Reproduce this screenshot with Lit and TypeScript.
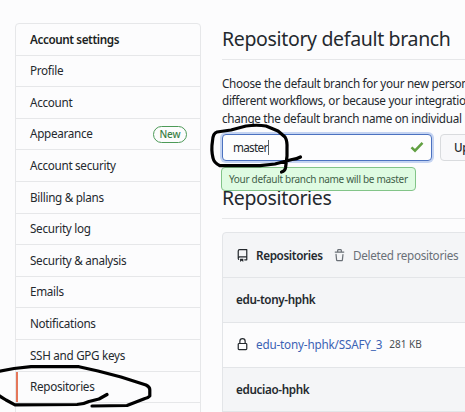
import { LitElement, html, css, svg } from "lit";
import { customElement } from "lit/decorators.js";

const MENU = [
  "Profile", "Account", "Appearance", "Account security", "Billing & plans", "Security log",
  "Security & analysis", "Emails", "Notifications", "SSH and GPG keys", "Repositories",
];

const ICONS = {
  repo: svg`<path fill-rule="evenodd" d="M2 2.5A2.5 2.5 0 014.5 0h8.75a.75.75 0 01.75.75v12.5a.75.75 0 01-.75.75h-2.5a.75.75 0 110-1.5h1.75v-2h-8a1 1 0 00-.714 1.7.75.75 0 01-1.072 1.05A2.495 2.495 0 012 11.5v-9zm10.500-1V9h-8c-.356 0-.694.074-1 .208V2.500a1 1 0 011-1h8zM5 12.250v3.250a.25.25 0 00.4.2l1.450-1.087a.25.25 0 01.3 0L8.600 15.700a.25.25 0 00.4-.2v-3.250a.25.25 0 00-.25-.25h-3.500a.25.25 0 00-.25.25z"/>`,
  trash: svg`<path fill-rule="evenodd" d="M6.500 1.750a.25.25 0 01.25-.25h2.500a.25.25 0 01.25.25V3h-3V1.750zm4.500 0V3h2.250a.75.75 0 010 1.500H2.750a.75.75 0 010-1.500H5V1.750C5 .784 5.784 0 6.750 0h2.500C10.216 0 11 .784 11 1.750zM4.496 6.675a.75.75 0 10-1.492.150l.660 6.600A1.750 1.750 0 005.405 15h5.190c.9 0 1.652-.681 1.741-1.576l.660-6.600a.75.75 0 00-1.492-.149l-.660 6.600a.25.25 0 01-.249.225h-5.190a.25.25 0 01-.249-.225l-.660-6.600z"/>`,
  lock: svg`<path fill-rule="evenodd" d="M4 4v2h-.25A1.750 1.750 0 002 7.750v5.500c0 .966.784 1.750 1.750 1.750h8.500A1.750 1.750 0 0014 13.250v-5.500A1.750 1.750 0 0012.250 6H12V4a4 4 0 10-8 0zm6.500 2V4a2.500 2.500 0 00-5 0v2h5zM12 7.500h.25a.25.25 0 01.25.25v5.500a.25.25 0 01-.25.25h-8.500a.25.25 0 01-.25-.25v-5.500a.25.25 0 01.25-.25H12z"/>`,
};
const icon = (name: keyof typeof ICONS) => html`<svg class="icon ${name}" viewBox="0 0 16 16">${ICONS[name]}</svg>`;

@customElement("app-root")
export class AppRoot extends LitElement {
  static styles = css`
    :host {
      display: block; position: relative; width: 465px; height: 412px; overflow: hidden;
      background: #fcfcfd; color: #24292e;
      font: 11.7px/17.3px "Noto Sans", "Open Sans", sans-serif; letter-spacing: -0.3px;
    }
    * { box-sizing: border-box; }
    .page { display: flex; gap: 21px; padding: 23px 0 0 15px; width: 800px; }
    .menu { width: 186px; border: 1px solid #e6e7e9; border-radius: 4px 4px 0 0; flex: none; height: 420px; }
    .item {
      height: 31.6px; padding: 0 13px 0 14px; display: flex; align-items: center;
      justify-content: space-between; border-bottom: 1px solid #e6e7e9;
    }
    .item.head { font-weight: 600; color: #1b1f23; letter-spacing: -0.4px; }
    .item.current { box-shadow: inset 2px 0 #e5775a; }
    .badge {
      border: 1px solid #4d9a58; border-radius: 9px; color: #3b8046; font-size: 10px; font-weight: 500;
      width: 34px; height: 17px; line-height: 15px; text-align: center; letter-spacing: -0.1px;
    }
    .main { flex: 1; display: flex; flex-direction: column; }
    h2 {
      margin: 0; font-size: 19.5px; line-height: 32px; font-weight: 400; white-space: nowrap;
      border-bottom: 1px solid #e6e7e9; letter-spacing: -0.34px;
    }
    .title { height: 37px; }
    .intro { margin: 15px 0 0; white-space: nowrap; }
    .intro .edge { color: #b9664f; }
    .form { display: flex; gap: 8px; margin-top: 7px; align-items: center; }
    .field {
      width: 210px; height: 27px; border: 1px solid #4c72c0; border-radius: 4px;
      box-shadow: 0 0 0 2px #c5d4f2; padding: 0 7px 0 10px; display: flex; align-items: center;
      background: #fdfdfe; letter-spacing: -0.7px;
    }
    .caret { width: 1px; height: 15px; background: #5d6468; margin-left: 0.5px; }
    .check { margin-left: auto; width: 14px; height: 12px; }
    .button {
      width: 90px; height: 27px; border: 1px solid #d9dbde; border-radius: 4px; background: #f8f8fa;
      padding-left: 13px; line-height: 25px; font-weight: 500;
    }
    .note {
      position: absolute; left: 221px; top: 167px; width: 195px; height: 24px; border: 1px solid #82c488;
      border-radius: 4px; background: #dffbe2; color: #3f5f49; font-size: 10px; line-height: 22px;
      padding-left: 7px; white-space: nowrap; letter-spacing: -0.3px;
    }
    .second { height: 37px; margin-top: 21px; }
    .box { margin-top: 13.6px; border: 1px solid #e3e5e8; border-radius: 4px 4px 0 0; background: #f4f5f7; }
    .row {
      height: 44.7px; padding-left: 13px; display: flex; align-items: center;
      border-bottom: 1px solid #e3e5e8; white-space: nowrap;
    }
    .strong { font-weight: 600; letter-spacing: -0.36px; }
    .row.white { background: #fcfcfd; }
    .icon { width: 13px; height: 13px; fill: currentColor; flex: none; margin-right: 7px; }
    .muted { color: #6a7077; display: flex; align-items: center; margin-left: 10.5px; }
    .link { color: #3b62b4; letter-spacing: -0.18px; }
    .size { font-size: 10px; margin-left: 7px; color: #484e54; letter-spacing: 0; }
    .ink { position: absolute; inset: 0; width: 465px; height: 412px; fill: none; stroke: #000;
      stroke-width: 3.2; stroke-linecap: round; stroke-linejoin: round; }
  `;

  render() {
    return html`
      <div class="page">
        <nav class="menu">
          <div class="item head"><span>Account settings</span></div>
          ${MENU.map((label) => html`
            <div class="item ${label === "Repositories" ? "current" : ""}">
              <span>${label}</span>${label === "Appearance" ? html`<span class="badge">New</span>` : ""}
            </div>`)}
        </nav>
        <main class="main">
          <h2 class="title">Repository default branch</h2>
          <p class="intro">
            Choose the default branch for your new person<br />different workflows, or because your integration<br />change the default branch name on individual <span class="edge">r</span>
          </p>
          <div class="form">
            <div class="field">
              <span>master</span><span class="caret"></span>
              <svg class="check" viewBox="0 0 14 12"><path d="M1.500 6.300 5 9.700 12.500 1.800" fill="none" stroke="#62a043" stroke-width="2.500" /></svg>
            </div>
            <div class="button">Update</div>
          </div>
          <h2 class="second">Repositories</h2>
          <div class="box">
            <div class="row">${icon("repo")}<span class="strong">Repositories</span><span class="muted">${icon("trash")}<span>Deleted repositories</span></span></div>
            <div class="row strong">edu-tony-hphk</div>
            <div class="row white">${icon("lock")}<span class="link">edu-tony-hphk/SSAFY_3</span><span class="size">281 KB</span></div>
            <div class="row strong">educiao-hphk</div>
          </div>
        </main>
      </div>
      <div class="note">Your default branch name will be master</div>
      <svg class="ink" viewBox="0 0 465 412">
        <path d="M300.500 157 Q297 159 292 159.500 L275 164 L260 165.700 H220 Q214 163 213 158 Q211 150 212.500 141 Q213 133 217 132 L231 130 L246 126 Q257 124.500 266 126 L278 131 L285 137 Q287.500 141 287 149 L287 156 L285.500 168 Q285 171 281.500 172" />
        <path d="M-2 371.500 L14 368.500 L31 366.700 H79 L98 371 L121 377 L146 385 Q150 387 149.800 390 V396 Q148 398 145 398.500 L136 402 L127 405.500 L92 406" />
        <path d="M-2 395 L6 400 L15 404.800 L77 404.500 Q84 404 89 401.500 L99 399 L107 394.500" />
      </svg>`;
  }
}
